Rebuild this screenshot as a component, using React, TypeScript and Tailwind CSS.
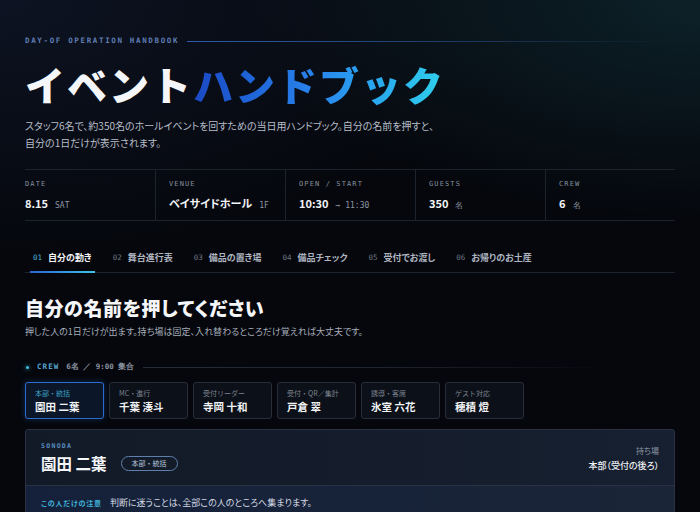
const jp = "font-['Noto_Sans_CJK_JP','Noto_Sans',sans-serif]"
const mono = "font-['DejaVu_Sans_Mono','Liberation_Mono',monospace]"

const stats = [
    { label: 'DATE', value: '8.15', unit: 'SAT' },
    { label: 'VENUE', value: 'ベイサイドホール', unit: '1F' },
    { label: 'OPEN / START', value: '10:30', unit: '→ 11:30' },
    { label: 'GUESTS', value: '350', unit: '名' },
    { label: 'CREW', value: '6', unit: '名' },
]

const tabs = [
    { no: '01', label: '自分の動き' },
    { no: '02', label: '舞台進行表' },
    { no: '03', label: '備品の置き場' },
    { no: '04', label: '備品チェック' },
    { no: '05', label: '受付でお渡し' },
    { no: '06', label: 'お帰りのお土産' },
]

const crew = [
    { role: '本部・統括', name: '園田 二葉' },
    { role: 'MC・進行', name: '千葉 湊斗' },
    { role: '受付リーダー', name: '寺岡 十和' },
    { role: '受付・QR／集計', name: '戸倉 翠' },
    { role: '誘導・客席', name: '氷室 六花' },
    { role: 'ゲスト対応', name: '穂積 燈' },
]

export default function App() {
    return (
        <div
            className={`${jp} min-h-screen w-full overflow-hidden bg-[#05070c] bg-[radial-gradient(ellipse_460px_220px_at_100%_0%,#0d2129_0%,transparent_100%),radial-gradient(ellipse_520px_260px_at_0%_0%,#0d1322_0%,transparent_100%)] px-[25px] pt-[36px] text-white [font-feature-settings:'palt']`}
        >
            {/* EYEBROW */}
            <div className="flex items-center gap-[8px]">
                <span className={`${mono} text-[7.5px] font-bold leading-[10px] tracking-[0.22em] text-[#5f7db3]`}>
                    DAY-OF OPERATION HANDBOOK
                </span>
                <div className="h-px flex-1 bg-gradient-to-r from-[#2c5aa8] via-[#1f3e6c] to-transparent" />
            </div>

            <h1 className="mt-[16px] text-[40px] font-black leading-[44px] tracking-[0.05em] text-[#f4f6f9] [font-feature-settings:normal]">
                イベント
                <span className="bg-gradient-to-r from-[#1b48c4] via-[#2a86ee] to-[#31d0ec] bg-clip-text text-transparent">
                    ハンドブック
                </span>
            </h1>

            <p className="mt-[11px] text-[10px] leading-[17px] text-[#b7bec9]">
                スタッフ6名で、約350名のホールイベントを回すための当日用ハンドブック。自分の名前を押すと、
                <br />
                自分の1日だけが表示されます。
            </p>

            {/* STATS */}
            <div className="mt-[18px] grid h-[52px] grid-cols-5 border-y border-[#1d232d]">
                {stats.map((s, i) => (
                    <div
                        key={s.label}
                        className={`flex flex-col justify-center gap-[7px] pt-[1px] ${i === 0 ? 'pl-0' : 'border-l border-[#1d232d] pl-[13px]'}`}
                    >
                        <span className={`${mono} text-[7px] leading-[10px] tracking-[0.16em] text-[#868f9d]`}>
                            {s.label}
                        </span>
                        <div className="flex items-baseline gap-[7px] leading-[14px]">
                            <span className="text-[11px] font-bold text-[#f2f4f7]">{s.value}</span>
                            <span className={`${mono} text-[8px] text-[#8f98a6]`}>{s.unit}</span>
                        </div>
                    </div>
                ))}
            </div>

            {/* TABS */}
            <div className="mt-[28px] flex gap-[15px] border-b border-[#1d232d] pl-[5px]">
                {tabs.map((t, i) => (
                    <div
                        key={t.no}
                        className={`-mb-px flex items-center gap-[6px] border-b-2 px-[3px] pb-[5px] pt-[1px] leading-[16px] ${i === 0 ? 'border-[#2f8fe0] [border-image:linear-gradient(90deg,#2a62d6,#3cc4e8)_1]' : 'border-transparent'}`}
                    >
                        <span className={`${mono} text-[7.5px] ${i === 0 ? 'text-[#4db6d8]' : 'text-[#6d7581]'}`}>{t.no}</span>
                        <span className={`text-[9px] font-bold ${i === 0 ? 'text-[#f2f4f7]' : 'text-[#aeb5c0]'}`}>{t.label}</span>
                    </div>
                ))}
            </div>

            {/* PICK NAME */}
            <h2 className="mt-[22px] text-[19px] font-black leading-[26px] tracking-[0.03em] text-[#f4f6f9]">
                自分の名前を押してください
            </h2>
            <p className="mt-[4px] text-[9px] leading-[14px] text-[#a6aebb]">
                押した人の1日だけが出ます。持ち場は固定、入れ替わるところだけ覚えれば大丈夫です。
            </p>

            <div className="mt-[22px] flex items-center gap-[7px] leading-[12px]">
                <span className="ml-[1px] h-[3px] w-[3px] rounded-full bg-[#3fc2e4] shadow-[0_0_4px_#3fc2e4]" />
                <span className={`${mono} ml-[1px] text-[7.5px] font-bold tracking-[0.14em] text-[#58a6d0]`}>CREW</span>
                <span className={`${mono} text-[7.5px] font-bold text-[#8c95a3]`}>6名 ／ 9:00 集合</span>
                <div className="ml-[2px] mr-[64px] h-px flex-1 bg-gradient-to-r from-[#262d38] via-[#1f252f] to-transparent" />
            </div>

            <div className="mt-[9px] flex gap-[5px]">
                {crew.map((c, i) => (
                    <button
                        key={c.name}
                        className={`flex h-[37px] w-[79px] flex-col justify-center gap-[2px] rounded-[3px] border pl-[9px] text-left ${i === 0 ? 'border-[#2b6bd0] bg-[#0b1628] shadow-[0_0_6px_rgba(43,107,208,0.35)]' : 'border-[#272e3a] bg-[#0c1018]'}`}
                    >
                        <span className={`text-[7px] leading-[10px] [font-feature-settings:normal] ${i === 0 ? 'text-[#3ca3c6]' : 'text-[#7c8491]'}`}>{c.role}</span>
                        <span className="text-[10.5px] font-bold leading-[14px] text-[#f2f4f7]">{c.name}</span>
                    </button>
                ))}
            </div>

            {/* DETAIL CARD */}
            <div className="mt-[10px] overflow-hidden rounded-[3px] border border-[#283244] bg-gradient-to-r from-[#121a27] to-[#172030]">
                <div className="flex h-[56px] items-center justify-between border-b border-[#283244] px-[15px]">
                    <div className="flex flex-col gap-[2px]">
                        <span className={`${mono} text-[6.5px] font-bold leading-[9px] tracking-[0.2em] text-[#5c8fc0]`}>SONODA</span>
                        <div className="flex items-center gap-[14px]">
                            <span className="text-[15.5px] font-bold leading-[20px] text-[#f4f6f9] [font-feature-settings:normal]">園田 二葉</span>
                            <span className="rounded-full border border-[#5f80ad] px-[10px] text-[7px] leading-[13px] text-[#b9c8dc] [font-feature-settings:normal]">
                                本部・統括
                            </span>
                        </div>
                    </div>
                    <div className="flex flex-col items-end gap-[4px] pt-[2px]">
                        <span className="text-[8px] leading-[10px] text-[#8c95a3]">持ち場</span>
                        <span className="text-[9px] font-medium leading-[12px] text-[#eef1f5]">本部（受付の後ろ）</span>
                    </div>
                </div>
                <div className="flex h-[40px] items-start gap-[8px] bg-gradient-to-r from-[#15213a] to-[#1a2538] px-[15px] pt-[11px]">
                    <span className="text-[7px] font-bold leading-[12px] tracking-[0.12em] text-[#3fb2d8]">この人だけの注意</span>
                    <span className="text-[9px] leading-[12px] text-[#d3d9e2]">判断に迷うことは、全部この人のところへ集まります。</span>
                </div>
            </div>
        </div>
    )
}
